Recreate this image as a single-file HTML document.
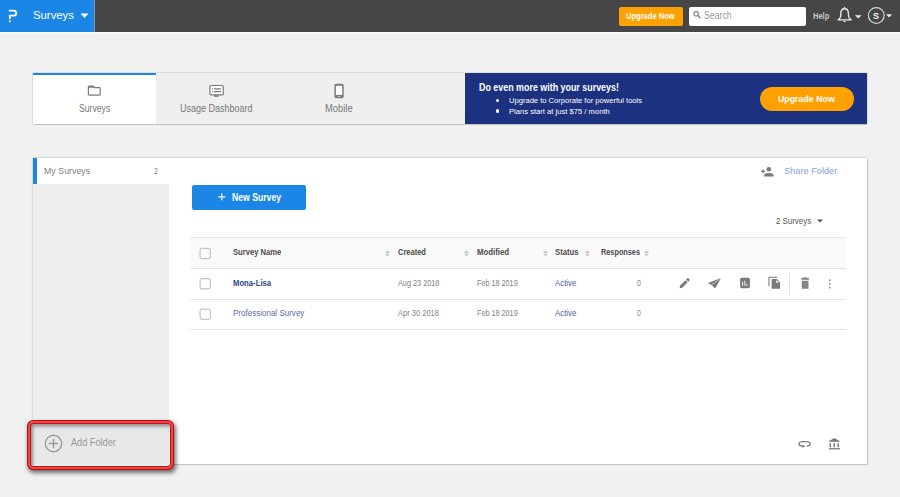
<!DOCTYPE html>
<html><head><meta charset="utf-8">
<style>
*{box-sizing:border-box;margin:0;padding:0}
html,body{width:900px;height:497px;overflow:hidden;background:#f1f1f1;font-family:"Liberation Sans",sans-serif;position:relative}
.abs{position:absolute}
.t{position:absolute;white-space:nowrap;line-height:1;transform-origin:0 0}
#hdr{left:0;top:0;width:900px;height:32px;background:#464646}
#brand{left:0;top:0;width:94px;height:32px;background:#1b86e5}
#brandsep{left:94px;top:0;width:1px;height:32px;background:#8a8f96}
#hline{left:0;top:32px;width:900px;height:2px;background:#fbfbfb}
#upg{left:619px;top:7px;width:64px;height:19px;background:#ffa100;border-radius:2px}
#search{left:689px;top:7px;width:117px;height:18.5px;background:#fff;border-radius:2px}
#card1{left:33px;top:73px;width:834px;height:51px;background:#efefef;box-shadow:0 0 1.5px rgba(0,0,0,.32), 0 0.5px 1px rgba(0,0,0,.12)}
#tab1{left:33px;top:73px;width:123px;height:51px;background:#fff}
#tab1bar{left:33px;top:73px;width:123px;height:2px;background:#1b86e5}
#banner{left:465px;top:73px;width:402px;height:51px;background:#1c3180}
#upg2{left:760px;top:87.3px;width:94px;height:23.3px;background:#ffa100;border-radius:12px}
#card2{left:33px;top:158px;width:834px;height:306px;background:#fff;box-shadow:0 0 2px rgba(0,0,0,.3), 0.5px 0.5px 1px rgba(0,0,0,.1)}
#side{left:33px;top:184px;width:136px;height:280px;background:#efefef}
#sidebar{left:33px;top:158px;width:3.5px;height:26px;background:#1b86e5}
#newbtn{left:192px;top:185px;width:114px;height:25px;background:#1b86e5;border-radius:2px}
#thead{left:190px;top:237px;width:656px;height:32px;background:#fafafa;border-top:1px solid #e6e6e6;border-bottom:1px solid #e2e2e2}
.rowline{position:absolute;left:190px;width:656px;height:1px;background:#e6e6e6}
.cb{position:absolute;width:11px;height:11px;border:1px solid #bdbdbd;border-radius:1px;background:#fff}
.sort{position:absolute;width:4px;height:7px}
#addf{left:27px;top:420px;width:147px;height:50px;border-radius:6px;background:#b80a0a;box-shadow:1.5px 2.5px 4px rgba(0,0,0,.55), -0.5px -0.5px 0.5px 0.5px rgba(255,255,255,.7)}
#addf1{left:1.3px;top:1.3px;right:1.3px;bottom:1.3px;border-radius:5px;background:#ee4646}
#addf2{left:2.7px;top:2.7px;right:2.7px;bottom:2.7px;border-radius:4px;background:#c01212}
#addf3{left:4px;top:4px;right:4px;bottom:4px;border-radius:3px;background:#e8e8e8;box-shadow:inset 2px 2.5px 3.5px rgba(0,0,0,.38), inset -1px -1px 1px rgba(255,255,255,.8)}
</style></head><body>
<div id="hdr" class="abs"></div>
<div id="brand" class="abs"></div>
<div id="brandsep" class="abs"></div>
<div id="hline" class="abs"></div>
<!-- P logo -->
<svg class="abs" style="left:0;top:0" width="24" height="26" viewBox="0 0 24 26">
<path d="M8.9 10.7 H13.4 Q16.2 10.7 16.2 13.15 Q16.2 15.6 13.4 15.6 H9.8 V18.9" fill="none" stroke="#fff" stroke-width="1.8"/>
<rect x="8.9" y="20.3" width="1.8" height="1.8" fill="#fff"/>
</svg>
<svg class="abs" style="left:80px;top:13px" width="9" height="6"><path d="M0.5 0.5 L8.5 0.5 L4.5 5 Z" fill="#fff"/></svg>

<div id="upg" class="abs"></div>
<div id="search" class="abs"></div>
<svg class="abs" style="left:690px;top:8px" width="14" height="14" viewBox="0 0 14 14"><circle cx="6.15" cy="5.85" r="2.2" fill="none" stroke="#858585" stroke-width="1.15"/><path d="M7.8 7.6 L10.3 10.1" stroke="#858585" stroke-width="1.4"/></svg>
<svg class="abs" style="left:836px;top:6px" width="18" height="19" viewBox="0 0 18 19"><circle cx="8.6" cy="1.9" r="0.9" fill="#eee"/><path d="M8.6 2.7 Q5.2 2.7 4.9 6.5 L4.6 10.5 Q4.3 12.5 2.1 13.9 H15.1 Q12.9 12.5 12.6 10.5 L12.3 6.5 Q12.0 2.7 8.6 2.7 Z" fill="none" stroke="#ececec" stroke-width="1.35" stroke-linejoin="round"/><path d="M6.9 15.1 Q8.6 17.4 10.3 15.1 Z" fill="#ececec"/></svg>
<svg class="abs" style="left:855px;top:14.5px" width="8" height="5"><path d="M0 0.2 L6.5 0.2 L3.25 3.5 Z" fill="#eee"/></svg>
<svg class="abs" style="left:867px;top:7px" width="19" height="19"><circle cx="9.3" cy="8.5" r="7.9" fill="none" stroke="#d8d8d8" stroke-width="1.2"/></svg>
<svg class="abs" style="left:886px;top:14px" width="7" height="5"><path d="M0 0.2 L6.2 0.2 L3.1 3.5 Z" fill="#eee"/></svg>

<!-- tabs card -->
<div id="card1" class="abs"></div>
<div id="tab1" class="abs"></div>
<div id="tab1bar" class="abs"></div>
<svg class="abs" style="left:82px;top:80px" width="26" height="22" viewBox="0 0 26 22"><path d="M6.4 7.7 V14.3 Q6.4 15.1 7.2 15.1 H17.4 Q18.2 15.1 18.2 14.3 V8.5 Q18.2 7.7 17.4 7.7 H12.6 L11.2 6.1 H7.2 Q6.4 6.1 6.4 6.9 Z" fill="none" stroke="#7a7a7a" stroke-width="1.2"/><path d="M6.4 6.1 H11.2 L12.6 7.7 H6.4 Z" fill="#7a7a7a"/></svg>
<svg class="abs" style="left:204px;top:80px" width="26" height="22" viewBox="0 0 26 22"><rect x="5.9" y="5.5" width="13.4" height="9.4" rx="1.2" fill="#fff" stroke="#7a7a7a" stroke-width="1.2"/><path d="M8 8.9 H8.9 M9.9 8.9 H17 M8 11.6 H8.9 M9.9 11.6 H17" stroke="#7a7a7a" stroke-width="1.1"/><rect x="10.2" y="15.3" width="4.6" height="1.5" fill="#7a7a7a"/></svg>
<svg class="abs" style="left:326px;top:80px" width="26" height="22" viewBox="0 0 26 22"><rect x="8.4" y="3.8" width="9.3" height="14.4" rx="1.8" fill="#7a7a7a"/><rect x="9.9" y="5.8" width="6.3" height="9.1" fill="#fff"/><rect x="11.8" y="16.1" width="2.4" height="0.8" fill="#d8d8d8"/></svg>

<div id="banner" class="abs"></div>
<div class="abs" style="left:495.6px;top:98.9px;width:3.5px;height:3.5px;border-radius:50%;background:#fff"></div>
<div class="abs" style="left:495.6px;top:109.3px;width:3.5px;height:3.5px;border-radius:50%;background:#fff"></div>
<div id="upg2" class="abs"></div>

<!-- main card -->
<div id="card2" class="abs"></div>
<div id="side" class="abs"></div>
<div id="sidebar" class="abs"></div>

<svg class="abs" style="left:756px;top:160px" width="30" height="22" viewBox="0 0 30 22"><circle cx="12.8" cy="9.3" r="2.3" fill="#7a7a7a"/><path d="M8.2 16.4 V15.3 Q8.2 13 12.85 13 Q17.5 13 17.5 15.3 V16.4 Z" fill="#7a7a7a"/><path d="M5.1 11.3 H9.1 M7.1 9.3 V13.3" stroke="#7a7a7a" stroke-width="1.3"/></svg>

<div id="newbtn" class="abs"></div>
<svg class="abs" style="left:217.5px;top:193.3px" width="8" height="8"><path d="M3.75 0.3 V7.3 M0.3 3.8 H7.3" stroke="#fff" stroke-width="1.2"/></svg>

<svg class="abs" style="left:817px;top:219px" width="6" height="4"><path d="M0 0.5 H6 L3 3.5 Z" fill="#555"/></svg>

<div id="thead" class="abs"></div>
<div class="rowline" style="top:299px"></div>
<div class="rowline" style="top:329px"></div>
<svg class="abs" style="left:190px;top:240px" width="30" height="90" viewBox="0 0 30 90">
<rect x="10.1" y="8.4" width="10.2" height="10.2" rx="1.8" fill="#fafafa" stroke="#c4c4c4" stroke-width="1.2"/>
<rect x="10.1" y="38.6" width="10.2" height="10.2" rx="1.8" fill="#fff" stroke="#c4c4c4" stroke-width="1.2"/>
<rect x="10.1" y="69.2" width="10.2" height="10.2" rx="1.8" fill="#fff" stroke="#c4c4c4" stroke-width="1.2"/>
</svg>

<svg class="abs" style="left:385.0px;top:249.8px" width="5" height="7" viewBox="0 0 5 7"><path d="M0 2.9 L2.5 0.2 L5 2.9 Z M0 3.7 L2.5 6.4 L5 3.7 Z" fill="#c6c6c6"/></svg>
<svg class="abs" style="left:463.5px;top:249.8px" width="5" height="7" viewBox="0 0 5 7"><path d="M0 2.9 L2.5 0.2 L5 2.9 Z M0 3.7 L2.5 6.4 L5 3.7 Z" fill="#c6c6c6"/></svg>
<svg class="abs" style="left:542.5px;top:249.8px" width="5" height="7" viewBox="0 0 5 7"><path d="M0 2.9 L2.5 0.2 L5 2.9 Z M0 3.7 L2.5 6.4 L5 3.7 Z" fill="#c6c6c6"/></svg>
<svg class="abs" style="left:585.2px;top:249.8px" width="5" height="7" viewBox="0 0 5 7"><path d="M0 2.9 L2.5 0.2 L5 2.9 Z M0 3.7 L2.5 6.4 L5 3.7 Z" fill="#c6c6c6"/></svg>
<svg class="abs" style="left:644.1px;top:249.8px" width="5" height="7" viewBox="0 0 5 7"><path d="M0 2.9 L2.5 0.2 L5 2.9 Z M0 3.7 L2.5 6.4 L5 3.7 Z" fill="#c6c6c6"/></svg>

<!-- action icons -->
<svg class="abs" style="left:674px;top:272px" width="52" height="22" viewBox="0 0 52 22">
<path d="M5.6 16.2 L6.14 13.54 L11.54 8.14 L13.66 10.26 L8.26 15.66 Z" fill="#7a7a7a"/>
<path d="M12.1 7.6 L13.9 5.8 L16.0 7.9 L14.2 9.7 Z" fill="#7a7a7a"/>
<path d="M34.0 10.9 L46.9 6.0 L37.0 12.9 Z" fill="#7a7a7a"/>
<path d="M37.6 13.2 L46.9 6.2 L41.6 15.7 L39.6 15.7 L39.4 14.6 Z" fill="#7a7a7a"/>
</svg>
<svg class="abs" style="left:734px;top:272px" width="52" height="22" viewBox="0 0 52 22">
<rect x="6.1" y="5.8" width="9.8" height="10.4" rx="1.6" fill="#7a7a7a"/>
<path d="M8.6 9.8 V13.9 M10.8 8.7 V13.9 M12.9 11.8 V13.9" stroke="#fff" stroke-width="0.9"/>
<path d="M35 13.9 V5.2 H43.1" fill="none" stroke="#7a7a7a" stroke-width="1.1"/>
<path d="M37.6 6.9 H42.6 L46 10.3 V16.8 H37.6 Z" fill="#7a7a7a"/>
<path d="M42.3 7.9 V10.8 H45.2 Z" fill="#fff"/>
</svg>
<div class="abs" style="left:789px;top:273px;width:1px;height:22px;background:#e3e3e3"></div>
<svg class="abs" style="left:786px;top:270px" width="52" height="26" viewBox="0 0 52 26">
<rect x="15.3" y="7.9" width="7.6" height="1.9" fill="#858585"/>
<rect x="17.6" y="7.3" width="3" height="1" fill="#858585"/>
<path d="M15.7 10.7 H22.5 V18.2 Q22.5 18.8 21.9 18.8 H16.3 Q15.7 18.8 15.7 18.2 Z" fill="#858585"/>
<rect x="42.9" y="9.4" width="1.7" height="1.6" fill="#8a8a8a"/>
<rect x="42.9" y="13.1" width="1.7" height="1.6" fill="#8a8a8a"/>
<rect x="42.9" y="16.8" width="1.7" height="1.6" fill="#8a8a8a"/>
</svg>

<!-- bottom icons -->
<svg class="abs" style="left:792px;top:432px" width="56" height="24" viewBox="0 0 56 24">
<path d="M14.7 14.2 Q18.3 14 18.3 11.8 Q18.3 9.7 14 9.7 H11 Q7 9.7 7 11.8 Q7 14 10.6 14.2" fill="none" stroke="#7a7a7a" stroke-width="1.25"/>
<path d="M10.4 12.5 L13.1 14.3 L10.4 16.1 Z" fill="#7a7a7a"/>
<path d="M36.7 9.7 L37 8.9 L42.3 5.9 L47.6 8.9 L47.9 9.7 Z" fill="#7a7a7a"/>
<path d="M38.3 11.2 V15.2 M42.3 11.2 V15.2 M46.2 11.2 V15.2" stroke="#7a7a7a" stroke-width="1.5"/>
<rect x="37" y="16.1" width="10.9" height="1.3" fill="#7a7a7a"/>
</svg>

<!-- add folder -->
<div id="addf" class="abs"><div id="addf1" class="abs"></div><div id="addf2" class="abs"></div><div id="addf3" class="abs"></div></div>
<svg class="abs" style="left:44px;top:434px" width="19" height="19"><circle cx="9.5" cy="9.5" r="8.2" fill="none" stroke="#9a9a9a" stroke-width="1.4"/><path d="M9.5 4.8 V14.2 M4.8 9.5 H14.2" stroke="#9a9a9a" stroke-width="1.4"/></svg>
<div class="t" id="hsurv" style="left:32.60px;top:9.42px;font-size:11.62px;font-weight:normal;color:#fff;transform:scaleX(0.9762)">Surveys</div>
<div class="t" id="hupg" style="left:625.80px;top:12.89px;font-size:8.24px;font-weight:bold;color:#fff;transform:scaleX(0.9167)">Upgrade Now</div>
<div class="t" id="hsearch" style="left:704.20px;top:11.27px;font-size:10.27px;font-weight:normal;color:#9a9a9a;transform:scaleX(0.8485)">Search</div>
<div class="t" id="hhelp" style="left:812.80px;top:11.06px;font-size:9.46px;font-weight:bold;color:#c8c8c8;transform:scaleX(0.7952)">Help</div>
<div class="t" id="hS" style="left:873.30px;top:12.37px;font-size:9.32px;font-weight:bold;color:#f2f2f2;transform:scaleX(0.9667)">S</div>
<div class="t" id="tsurv" style="left:78.70px;top:103.59px;font-size:10.14px;font-weight:normal;color:#777;transform:scaleX(0.8541)">Surveys</div>
<div class="t" id="tusage" style="left:180.40px;top:103.59px;font-size:10.14px;font-weight:normal;color:#777;transform:scaleX(0.8890)">Usage Dashboard</div>
<div class="t" id="tmob" style="left:324.90px;top:103.59px;font-size:10.14px;font-weight:normal;color:#777;transform:scaleX(0.9267)">Mobile</div>
<div class="t" id="btitle" style="left:478.90px;top:83.17px;font-size:10.27px;font-weight:bold;color:#fff;transform:scaleX(0.8665)">Do even more with your surveys!</div>
<div class="t" id="bl1" style="left:509.30px;top:97.41px;font-size:8.11px;font-weight:normal;color:#fff;transform:scaleX(0.9359)">Upgrade to Corporate for powerful tools</div>
<div class="t" id="bl2" style="left:509.30px;top:107.61px;font-size:8.11px;font-weight:normal;color:#fff;transform:scaleX(0.9411)">Plans start at just $75 / month</div>
<div class="t" id="bupg" style="left:778.10px;top:94.89px;font-size:9.19px;font-weight:bold;color:#fff;transform:scaleX(0.9600)">Upgrade Now</div>
<div class="t" id="mysurv" style="left:43.80px;top:167.47px;font-size:9.32px;font-weight:normal;color:#808080;transform:scaleX(0.9490)">My Surveys</div>
<div class="t" id="mycnt" style="left:153.70px;top:166.73px;font-size:8.78px;font-weight:normal;color:#828282;transform:scaleX(0.7600)">2</div>
<div class="t" id="share" style="left:783.50px;top:165.81px;font-size:9.86px;font-weight:normal;color:#86a2e4;transform:scaleX(0.9368)">Share Folder</div>
<div class="t" id="newsv" style="left:231.90px;top:192.97px;font-size:10.27px;font-weight:bold;color:#fff;transform:scaleX(0.8424)">New Survey</div>
<div class="t" id="cnt" style="left:775.70px;top:217.03px;font-size:8.78px;font-weight:normal;color:#555;transform:scaleX(0.9000)">2 Surveys</div>
<div class="t" id="h_name" style="left:233.20px;top:247.93px;font-size:8.78px;font-weight:bold;color:#4a4a4a;transform:scaleX(0.8679)">Survey Name</div>
<div class="t" id="h_cr" style="left:397.70px;top:247.93px;font-size:8.78px;font-weight:bold;color:#4a4a4a;transform:scaleX(0.8545)">Created</div>
<div class="t" id="h_mod" style="left:476.60px;top:247.93px;font-size:8.78px;font-weight:bold;color:#4a4a4a;transform:scaleX(0.8917)">Modified</div>
<div class="t" id="h_st" style="left:555.10px;top:247.93px;font-size:8.78px;font-weight:bold;color:#4a4a4a;transform:scaleX(0.8815)">Status</div>
<div class="t" id="h_resp" style="left:601.40px;top:247.93px;font-size:8.78px;font-weight:bold;color:#4a4a4a;transform:scaleX(0.8340)">Responses</div>
<div class="t" id="r1n" style="left:233.20px;top:277.76px;font-size:9.46px;font-weight:bold;color:#2a4686;transform:scaleX(0.8149)">Mona-Lisa</div>
<div class="t" id="r1c" style="left:397.70px;top:277.76px;font-size:9.46px;font-weight:normal;color:#828282;transform:scaleX(0.7722)">Aug 23 2018</div>
<div class="t" id="r1m" style="left:476.60px;top:277.76px;font-size:9.46px;font-weight:normal;color:#828282;transform:scaleX(0.7660)">Feb 18 2019</div>
<div class="t" id="r1s" style="left:555.10px;top:277.76px;font-size:9.46px;font-weight:normal;color:#4c5fa0;transform:scaleX(0.8308)">Active</div>
<div class="t" id="r1r" style="left:636.60px;top:277.76px;font-size:9.46px;font-weight:normal;color:#828282;transform:scaleX(0.7333)">0</div>
<div class="t" id="r2n" style="left:233.20px;top:308.16px;font-size:9.46px;font-weight:normal;color:#5b6ca4;transform:scaleX(0.8488)">Professional Survey</div>
<div class="t" id="r2c" style="left:397.70px;top:308.16px;font-size:9.46px;font-weight:normal;color:#828282;transform:scaleX(0.7942)">Apr 30 2018</div>
<div class="t" id="r2m" style="left:476.60px;top:308.16px;font-size:9.46px;font-weight:normal;color:#828282;transform:scaleX(0.7660)">Feb 18 2019</div>
<div class="t" id="r2s" style="left:555.10px;top:308.16px;font-size:9.46px;font-weight:normal;color:#4c5fa0;transform:scaleX(0.8308)">Active</div>
<div class="t" id="r2r" style="left:636.60px;top:308.16px;font-size:9.46px;font-weight:normal;color:#828282;transform:scaleX(0.7333)">0</div>
<div class="t" id="addft" style="left:70.80px;top:437.44px;font-size:10.54px;font-weight:normal;color:#999;transform:scaleX(0.8692)">Add Folder</div>
</body></html>
